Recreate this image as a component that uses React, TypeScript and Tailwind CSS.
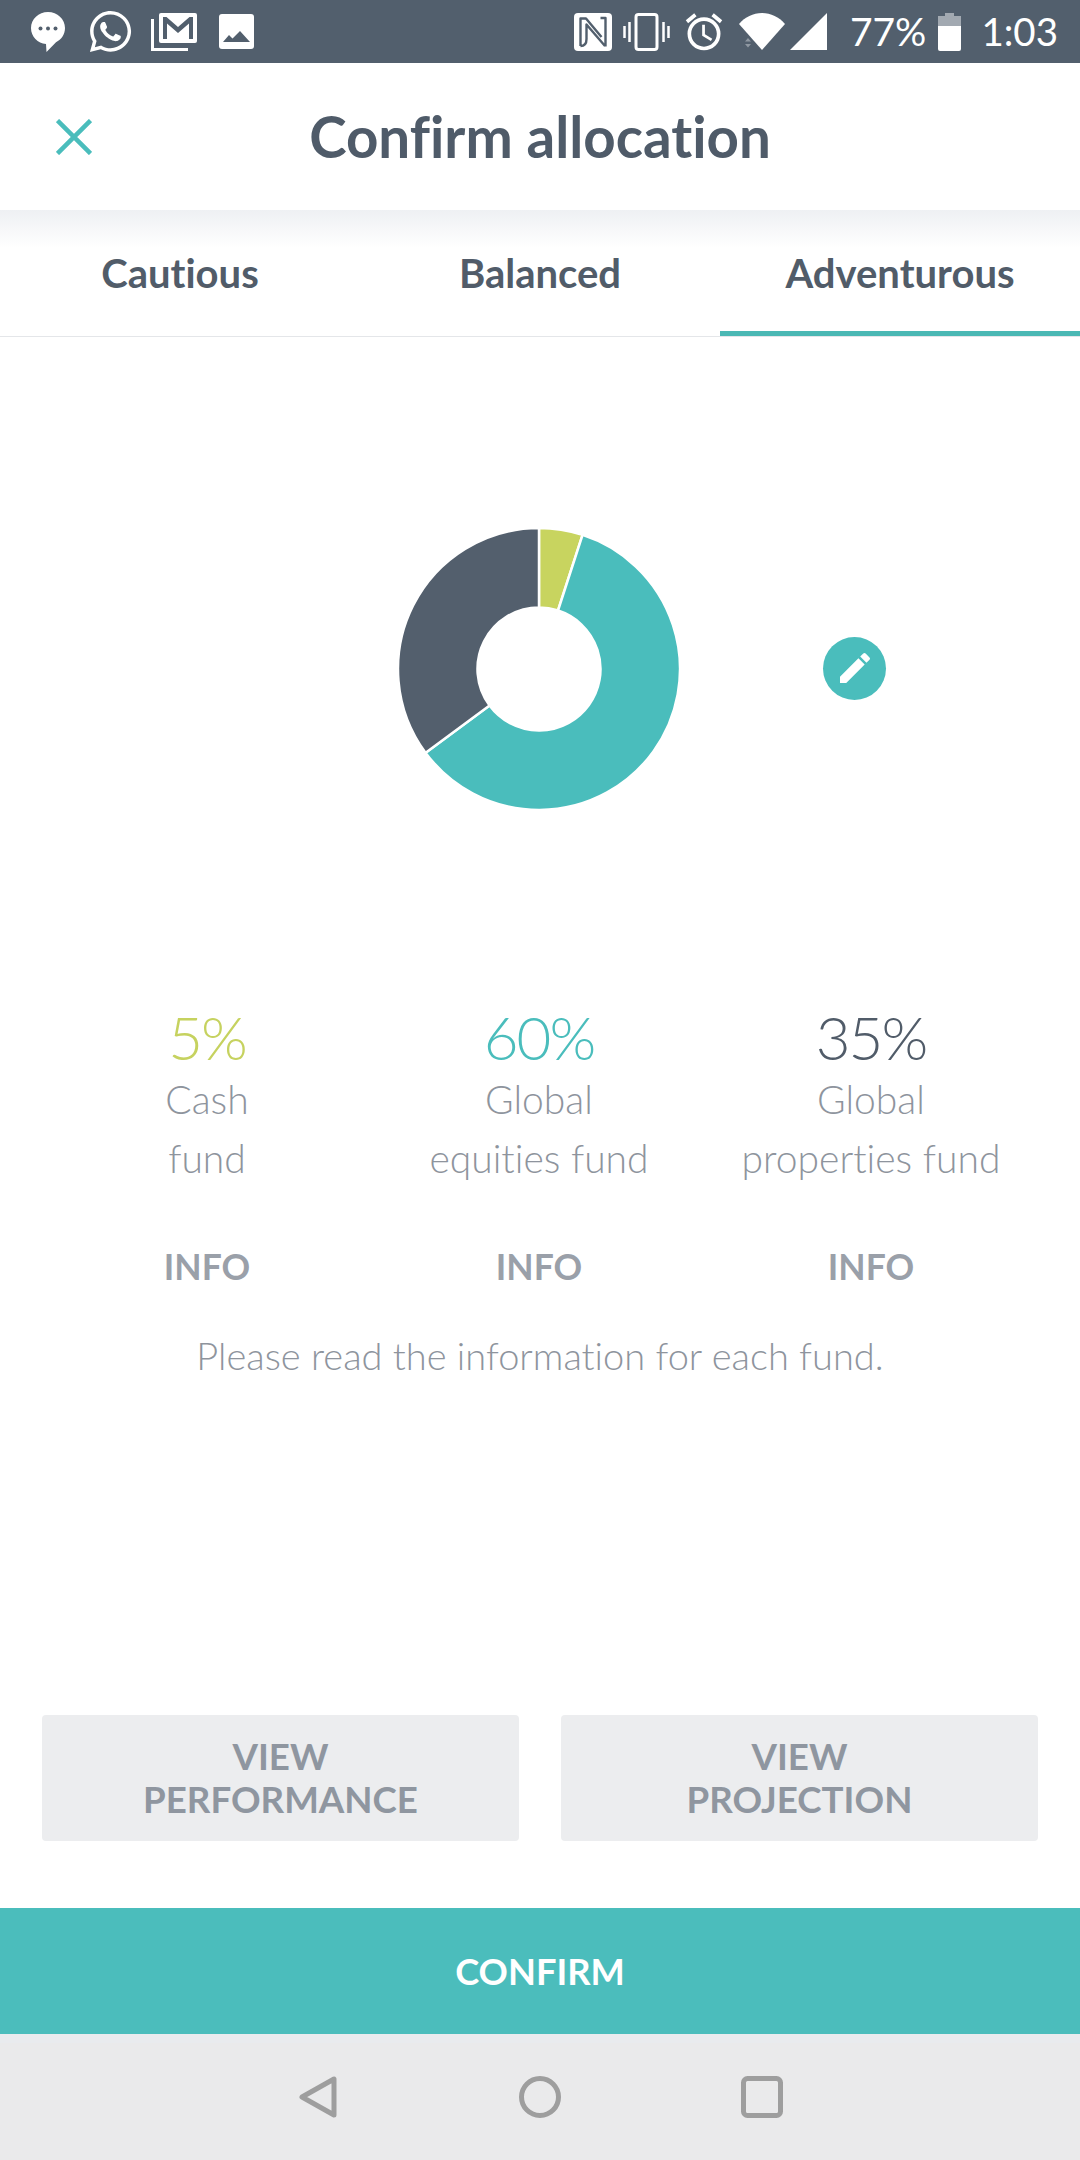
import React from 'react';
import { FaWhatsapp } from 'react-icons/fa';
import { MdOutlineAlarm, MdEdit } from 'react-icons/md';

const CX = 142;
const CY = 142;
const R = 141;
const IR = 61.5;

const point = (radius: number, deg: number) => {
  const a = ((deg - 90) * Math.PI) / 180;
  return `${CX + radius * Math.cos(a)} ${CY + radius * Math.sin(a)}`;
};

const slice = (from: number, to: number) => {
  const large = to - from > 180 ? 1 : 0;
  return `M${point(R, from)} A${R} ${R} 0 ${large} 1 ${point(R, to)} L${point(IR, to)} A${IR} ${IR} 0 ${large} 0 ${point(IR, from)} Z`;
};

const funds = [
  { pct: '5%', color: 'text-[#c6d25f]', lines: ['Cash', 'fund'] },
  { pct: '60%', color: 'text-[#4abdbc]', lines: ['Global', 'equities fund'] },
  { pct: '35%', color: 'text-[#515c69]', lines: ['Global', 'properties fund'] },
];

const Donut = () => (
  <svg width="284" height="284" viewBox="0 0 284 284" className="shrink-0">
    <path d={slice(0, 18)} fill="#c8d45f" stroke="#fff" strokeWidth="2.5" />
    <path d={slice(18, 233.5)} fill="#4abdbc" stroke="#fff" strokeWidth="2.5" />
    <path d={slice(233.5, 360)} fill="#535f6d" stroke="#fff" strokeWidth="2.5" />
  </svg>
);

const StatusLeft = () => (
  <div className="flex items-center">
    {/* message bubble */}
    <svg width="34" height="40" viewBox="0 0 34 40" className="ml-[31px]">
      <path d="M17 0C7.6 0 0 7 0 16c0 8.6 6.8 15.400 15 16l.5 8 9.500-9.800C30.500 27.500 34 22.200 34 16 34 7 26.400 0 17 0z" fill="#fff" />
      <circle cx="9.500" cy="16.500" r="2" fill="#525f6d" />
      <circle cx="17" cy="16.500" r="2" fill="#525f6d" />
      <circle cx="24.500" cy="16.500" r="2" fill="#525f6d" />
    </svg>
    <FaWhatsapp className="ml-[22px] text-white" size={47} />
    {/* gmail */}
    <svg width="46" height="38" viewBox="0 0 46 38" className="ml-[17px]">
      <path d="M1.500 6v30.500H37" fill="none" stroke="#fff" strokeWidth="3" />
      <rect x="8" y="0" width="38" height="30" rx="2" fill="#fff" />
      <path d="M12 4h3.500L27 14 38.500 4H42v22h-4V10.500L27 20 16 10.500V26h-4z" fill="#525f6d" />
    </svg>
    {/* picture */}
    <svg width="35" height="35" viewBox="0 0 35 35" className="ml-[22px]">
      <rect width="35" height="35" rx="3" fill="#fff" />
      <path d="M4 28l6-7 3.500 3.500L21 17l10 11z" fill="#525f6d" />
    </svg>
  </div>
);

const StatusRight = () => (
  <div className="flex items-center">
    {/* nfc */}
    <svg width="38" height="38" viewBox="0 0 38 38">
      <rect width="38" height="38" rx="4" fill="#fff" />
      <path d="M6.500 33V5.500h5.500L27.500 24M31.500 33.500V5h-5M31 33 12.500 11.500V26c0 4-2 7-6 7" fill="none" stroke="#525f6d" strokeWidth="2.400" strokeLinejoin="round" />
    </svg>
    {/* vibrate */}
    <svg width="47" height="38" viewBox="0 0 47 38" className="ml-[11px]">
      <rect x="13" y="1.500" width="21" height="35" rx="2.500" fill="none" stroke="#fff" strokeWidth="3" />
      <path d="M6.500 9v20M1.500 13v12M40.500 9v20M45.500 13v12" stroke="#fff" strokeWidth="2.500" />
    </svg>
    <MdOutlineAlarm className="ml-[12px] text-white" size={44} />
    {/* wifi */}
    <svg width="46" height="37" viewBox="0 0 46 37" className="ml-[13px]">
      <path d="M0 11C6 4 14 0 23 0s17 4 23 11L23 37z" fill="#fff" />
      <path d="M6 28.500l3-3.500 3 3.500zM6 31l3 3.500 3-3.500z" fill="#8f98a2" />
    </svg>
    {/* signal */}
    <svg width="37" height="37" viewBox="0 0 37 37" className="ml-[5px]">
      <path d="M37 0v37H0z" fill="#fff" />
    </svg>
    <span className="ml-[23px] text-[39px] leading-none font-normal text-white">77%</span>
    {/* battery */}
    <svg width="23" height="38" viewBox="0 0 23 38" className="ml-[12px]">
      <path d="M7 0h9v3h7v10H0V3h7z" fill="#a2a9b1" />
      <path d="M0 13h23v23a2 2 0 0 1-2 2H2a2 2 0 0 1-2-2z" fill="#fff" />
    </svg>
    <span className="ml-[20px] mr-[22px] text-[38.5px] leading-none font-normal text-white">1:03</span>
  </div>
);

export default function App() {
  return (
    <div className="w-[1080px] h-[2160px] flex flex-col bg-white overflow-hidden font-['Lato',sans-serif] [font-variant-ligatures:none]">
      <div className="h-[63px] shrink-0 bg-[#525f6d] flex items-center justify-between">
        <StatusLeft />
        <StatusRight />
      </div>

      <div className="h-[147px] shrink-0 grid grid-cols-[1fr_auto_1fr] items-center">
        <svg width="36" height="36" viewBox="0 0 36 36" className="ml-[56px]">
          <path d="M1.500 1.500l33 33M34.500 1.500l-33 33" stroke="#4abdbc" strokeWidth="4.500" />
        </svg>
        <h1 className="text-[56.5px] leading-none font-bold text-[#4f5b69]">Confirm allocation</h1>
        <div />
      </div>

      <div className="h-[127px] shrink-0 grid grid-cols-3 border-b border-[#e4e6e9] bg-[linear-gradient(#eef0f3,#ffffff_38px)] text-[40px] font-bold text-[#515c69]">
        <div className="flex items-center justify-center border-b-[5px] border-transparent pt-[4px]">Cautious</div>
        <div className="flex items-center justify-center border-b-[5px] border-transparent pt-[4px]">Balanced</div>
        <div className="flex items-center justify-center border-b-[5px] border-[#4ab8b4] pt-[4px]">Adventurous</div>
      </div>

      <div className="flex-1 flex flex-col">
        <div className="flex items-center pl-[397px] pt-[190px]">
          <Donut />
          <button className="ml-[142px] mt-[-2px] w-[63px] h-[63px] rounded-full bg-[#4abdbc] flex items-center justify-center text-white">
            <MdEdit size={40} />
          </button>
        </div>

        <div className="grid grid-cols-[332px_332px_332px] pl-[41px] mt-[192px] text-center">
          {funds.map((f) => (
            <div key={f.pct} className="flex flex-col items-center">
              <div className={`text-[60px] leading-[68px] tracking-[-2px] font-light ${f.color}`}>{f.pct}</div>
              <div className="text-[39px] leading-[59px] font-light text-[#8e949d] mt-[-1px]">
                {f.lines.map((l) => (
                  <div key={l}>{l}</div>
                ))}
              </div>
              <div className="text-[35.5px] leading-none font-bold text-[#9aa0a9] mt-[61px]">INFO</div>
            </div>
          ))}
        </div>

        <p className="text-center text-[38px] leading-none font-light text-[#8e949d] mt-[51px]">
          Please read the information for each fund.
        </p>

        <div className="mt-auto flex justify-between px-[42px] mb-[67px]">
          <button className="w-[477px] h-[126px] rounded-[4px] bg-[#ecedef] text-[36.7px] leading-[43px] font-bold text-[#8f96a0]">
            VIEW
            <br />
            PERFORMANCE
          </button>
          <button className="w-[477px] h-[126px] rounded-[4px] bg-[#ecedef] text-[36.7px] leading-[43px] font-bold text-[#8f96a0]">
            VIEW
            <br />
            PROJECTION
          </button>
        </div>
      </div>

      <button className="h-[126px] shrink-0 bg-[#4bbdbc] text-[36.3px] font-bold text-white">CONFIRM</button>

      <div className="h-[126px] shrink-0 bg-[linear-gradient(#e9ebee_9px,#eaeaeb_9px)] flex items-center justify-center gap-[180px]">
        <svg width="42" height="44" viewBox="0 0 42 44">
          <path d="M37 4v36L5 22z" fill="none" stroke="#9e9e9e" strokeWidth="5" strokeLinejoin="round" />
        </svg>
        <svg width="42" height="42" viewBox="0 0 42 42">
          <circle cx="21" cy="21" r="18.500" fill="none" stroke="#9e9e9e" strokeWidth="5" />
        </svg>
        <svg width="42" height="42" viewBox="0 0 42 42">
          <rect x="2.500" y="2.500" width="37" height="37" rx="4" fill="none" stroke="#9e9e9e" strokeWidth="5" />
        </svg>
      </div>
    </div>
  );
}
